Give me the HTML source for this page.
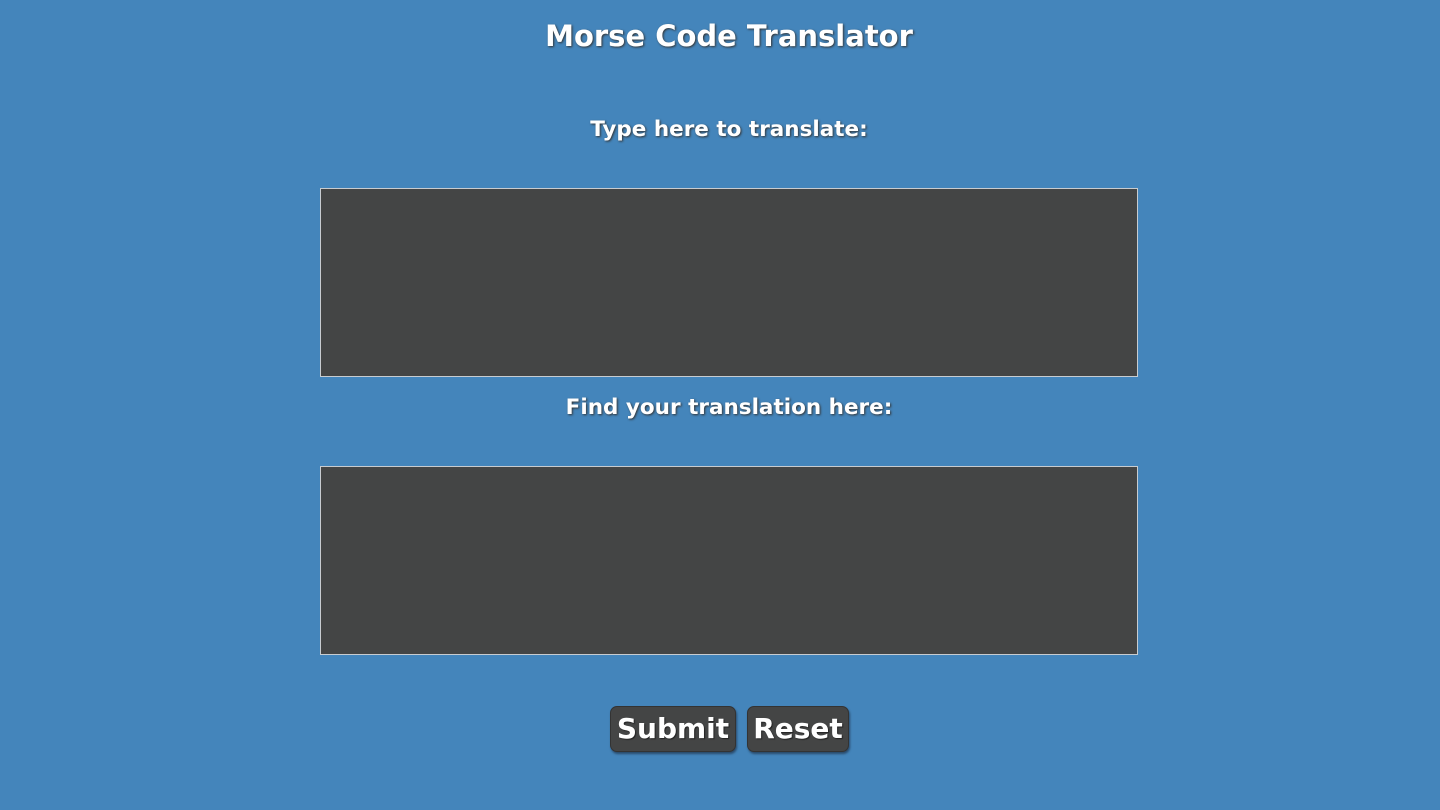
<!DOCTYPE html>
<html><head><meta charset="utf-8"><style>
html,body{margin:0;padding:0;width:1440px;height:810px;background:#4485bb;overflow:hidden;font-family:"DejaVu Sans","Liberation Sans",sans-serif;font-weight:bold;color:#fff}
.t{position:absolute;left:19px;width:1420px;text-align:center;text-shadow:1px 1px 2px #333;white-space:nowrap}
.box{position:absolute;left:320px;width:816px;height:187px;background:#444545;border:1px solid #c8ccd0}
.btn{position:absolute;top:706px;height:44px;background:#444545;border:1px solid #333;border-radius:7px;box-shadow:1px 2px 2px #2a4a6a;font-size:28px;line-height:44px;text-align:center;color:#fff;text-shadow:1px 1px 1px #222}
</style></head><body>
<div class="t" style="top:17px;font-size:29px;line-height:38px">Morse Code Translator</div>
<div class="t" style="top:116px;font-size:21.5px;line-height:28px">Type here to translate:</div>
<div class="box" style="top:188px"></div>
<div class="t" style="top:394px;font-size:21.5px;line-height:28px">Find your translation here:</div>
<div class="box" style="top:466px"></div>
<div class="btn" style="left:610px;width:124px">Submit</div>
<div class="btn" style="left:747px;width:100px">Reset</div>
</body></html>
